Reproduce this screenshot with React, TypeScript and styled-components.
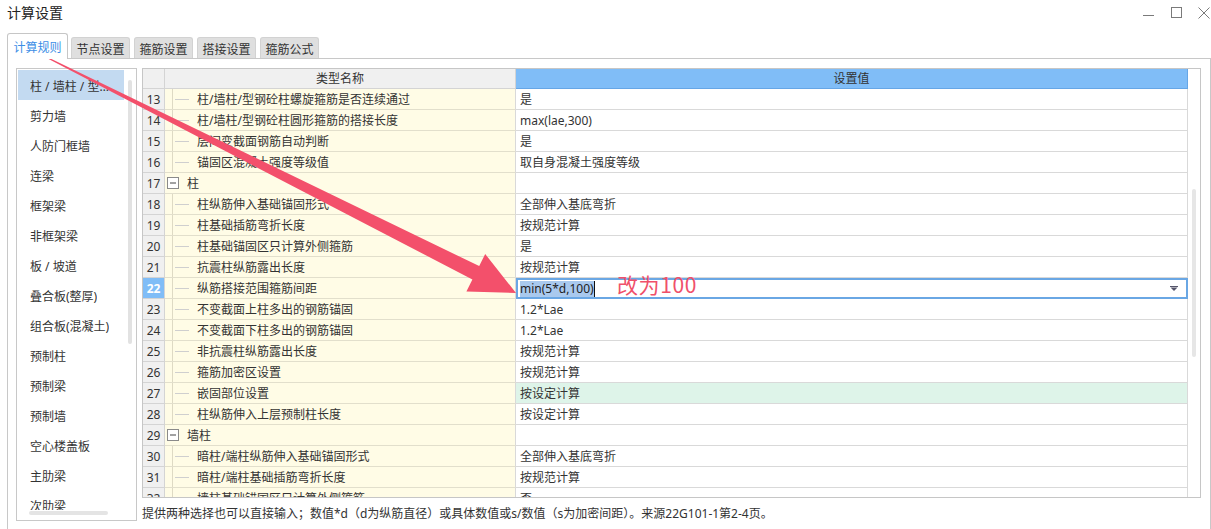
import React from "react";
import styled, { createGlobalStyle } from "styled-components";

type Row = {
  n: number;
  name: string;
  value?: string;
  group?: boolean;
  tone?: "edit" | "green";
};

const GlobalStyle = createGlobalStyle`
  html, body {
    margin: 0;
    padding: 0;
    background: #ffffff;
    overflow: hidden;
  }
  body {
    font-family: "Noto Sans", "Noto Sans CJK SC", sans-serif;
    font-size: 12px;
    color: #333333;
  }
`;

const Window = styled.div`
  position: relative;
  width: 1211px;
  height: 545px;
  display: flex;
  flex-direction: column;
  background: #ffffff;
`;

const TitleBar = styled.div`
  height: 26px;
  display: flex;
  align-items: center;
  justify-content: space-between;
  padding-left: 7px;
`;

const Title = styled.div`
  font-size: 14px;
  color: #222222;
  line-height: 18px;
`;

const Controls = styled.div`
  display: flex;
  gap: 16px;
  padding-right: 1px;
`;

const TabStrip = styled.div`
  margin-top: 7px;
  height: 25px;
  display: flex;
  align-items: flex-end;
  padding-left: 7px;
  gap: 3px;
`;

const Tab = styled.div<{ $active?: boolean }>`
  position: relative;
  z-index: 1;
  box-sizing: border-box;
  width: ${(p) => (p.$active ? 61 : 59)}px;
  height: ${(p) => (p.$active ? 26 : 21)}px;
  margin-bottom: ${(p) => (p.$active ? -1 : 0)}px;
  margin-right: ${(p) => (p.$active ? 0 : 1)}px;
  display: flex;
  align-items: center;
  justify-content: center;
  border: 1px solid ${(p) => (p.$active ? "#c6c6c6" : "#d2d2d2")};
  border-bottom: none;
  border-radius: 3px 3px 0 0;
  background: ${(p) => (p.$active ? "#ffffff" : "#dfdfdf")};
  color: ${(p) => (p.$active ? "#3d8ee6" : "#333333")};
  font-size: 12px;
  padding-top: ${(p) => (p.$active ? 0 : 1)}px;
`;

const Panel = styled.div`
  flex: 1;
  margin-left: 7px;
  border: 1px solid #c8c8c8;
  display: flex;
  align-items: flex-start;
  gap: 5px;
  padding: 9px 9px 0 8px;
`;

const ListBox = styled.div`
  box-sizing: border-box;
  width: 121px;
  height: 453px;
  border: 1px solid #c8c8c8;
  display: flex;
  flex-direction: column;
  overflow: hidden;
`;

const ListMain = styled.div`
  flex: 1;
  display: flex;
  overflow: hidden;
`;

const ListItems = styled.div`
  width: 107px;
  padding: 1px 0 0 1px;
  box-sizing: border-box;
  display: flex;
  flex-direction: column;
`;

const ListItem = styled.div<{ $selected?: boolean }>`
  flex: 0 0 30px;
  box-sizing: border-box;
  padding: 1px 10px 0 12px;
  display: flex;
  align-items: center;
  background: ${(p) => (p.$selected ? "#c3daf1" : "transparent")};
  color: #333333;
  white-space: nowrap;
  overflow: hidden;
  span {
    overflow: hidden;
    text-overflow: ellipsis;
  }
`;

const VScroll = styled.div<{ $top: number; $height: number }>`
  width: 12px;
  &::after {
    content: "";
    display: block;
    width: 4px;
    margin-left: 4px;
    margin-top: ${(p) => p.$top}px;
    height: ${(p) => p.$height}px;
    border-radius: 2px;
    background: #e2e2e2;
  }
`;

const HScroll = styled.div`
  height: 10px;
  flex: 0 0 10px;
  &::after {
    content: "";
    display: block;
    width: 79px;
    height: 4px;
    margin: 1px 0 0 12px;
    border-radius: 2px;
    background: #e4e4e4;
  }
`;

const RightCol = styled.div`
  width: 1059px;
  display: flex;
  flex-direction: column;
`;

const Table = styled.div`
  box-sizing: border-box;
  height: 430px;
  border: 1px solid #c6c6c6;
  display: flex;
  overflow: hidden;
`;

const Grid = styled.div`
  width: 1045px;
  display: grid;
  grid-template-columns: 22px 351px 672px;
  grid-template-rows: 20px;
  grid-auto-rows: 21px;
  align-content: start;
  overflow: hidden;
`;

const Cell = styled.div`
  box-sizing: border-box;
  border-right: 1px solid #d9d9d9;
  border-bottom: 1px solid #d9d9d9;
  display: flex;
  align-items: center;
  white-space: nowrap;
  overflow: hidden;
  line-height: 16px;
  padding-top: 1px;
`;

const HeadCell = styled(Cell)<{ $blue?: boolean }>`
  justify-content: center;
  background: ${(p) => (p.$blue ? "#80bdf7" : "#f0f0f0")};
  border-color: ${(p) => (p.$blue ? "#66a6e6" : "#d4d4d4")};
  color: #333333;
`;

const NumCell = styled(Cell)<{ $active?: boolean }>`
  justify-content: center;
  background: ${(p) => (p.$active ? "#80bdf7" : "#f0f0f0")};
  border-color: #d4d4d4;
  color: ${(p) => (p.$active ? "#ffffff" : "#333333")};
  font-weight: ${(p) => (p.$active ? 700 : 400)};
`;

const NameCell = styled(Cell)`
  background: #fffce6;
  border-bottom-color: #e2dfcc;
  padding-top: 0;
  svg {
    flex: 0 0 auto;
  }
`;

const ValueCell = styled(Cell)<{ $tone?: "edit" | "green" }>`
  padding-left: 4px;
  background: ${(p) => (p.$tone === "green" ? "#def4e9" : "#ffffff")};
  ${(p) =>
    p.$tone === "edit"
      ? `border: none; box-shadow: inset 0 0 0 2px #6aa7e4; justify-content: space-between; padding-right: 10px;`
      : ""}
`;

const TreeText = styled.span`
  margin-left: 1px;
  padding-top: 1px;
`;

const Selected = styled.span`
  background: #a9c9ee;
  color: #222222;
  border-right: 1px solid #111111;
`;

const TableScroll = styled.div`
  width: 12px;
  &::after {
    content: "";
    display: block;
    width: 4px;
    height: 168px;
    margin: 120px 0 0 4px;
    border-radius: 2px;
    background: #e6e6e6;
  }
`;

const Status = styled.div`
  margin-top: 7px;
  line-height: 17px;
  color: #333333;
  white-space: nowrap;
`;

const Overlay = styled.svg`
  position: absolute;
  left: 0;
  top: 0;
  pointer-events: none;
`;

const Note = styled.div`
  position: absolute;
  left: 617px;
  top: 270px;
  font-family: "Noto Sans CJK SC", "Noto Sans", sans-serif;
  font-size: 21px;
  letter-spacing: 0.6px;
  line-height: 28px;
  color: #f0506a;
`;

const listItems = [
  "柱 / 墙柱 / 型钢混凝土柱",
  "剪力墙",
  "人防门框墙",
  "连梁",
  "框架梁",
  "非框架梁",
  "板 / 坡道",
  "叠合板(整厚)",
  "组合板(混凝土)",
  "预制柱",
  "预制梁",
  "预制墙",
  "空心楼盖板",
  "主肋梁",
  "次肋梁",
];

const rows: Row[] = [
  { n: 13, name: "柱/墙柱/型钢砼柱螺旋箍筋是否连续通过", value: "是" },
  { n: 14, name: "柱/墙柱/型钢砼柱圆形箍筋的搭接长度", value: "max(lae,300)" },
  { n: 15, name: "层间变截面钢筋自动判断", value: "是" },
  { n: 16, name: "锚固区混凝土强度等级值", value: "取自身混凝土强度等级" },
  { n: 17, name: "柱", group: true },
  { n: 18, name: "柱纵筋伸入基础锚固形式", value: "全部伸入基底弯折" },
  { n: 19, name: "柱基础插筋弯折长度", value: "按规范计算" },
  { n: 20, name: "柱基础锚固区只计算外侧箍筋", value: "是" },
  { n: 21, name: "抗震柱纵筋露出长度", value: "按规范计算" },
  { n: 22, name: "纵筋搭接范围箍筋间距", value: "min(5*d,100)", tone: "edit" },
  { n: 23, name: "不变截面上柱多出的钢筋锚固", value: "1.2*Lae" },
  { n: 24, name: "不变截面下柱多出的钢筋锚固", value: "1.2*Lae" },
  { n: 25, name: "非抗震柱纵筋露出长度", value: "按规范计算" },
  { n: 26, name: "箍筋加密区设置", value: "按规范计算" },
  { n: 27, name: "嵌固部位设置", value: "按设定计算", tone: "green" },
  { n: 28, name: "柱纵筋伸入上层预制柱长度", value: "按设定计算" },
  { n: 29, name: "墙柱", group: true },
  { n: 30, name: "暗柱/端柱纵筋伸入基础锚固形式", value: "全部伸入基底弯折" },
  { n: 31, name: "暗柱/端柱基础插筋弯折长度", value: "按规范计算" },
  { n: 32, name: "墙柱基础锚固区只计算外侧箍筋", value: "否" },
];

const TreeGuide: React.FC<{ group?: boolean }> = ({ group }) =>
  group ? (
    <svg width="21" height="20" viewBox="0 0 21 20">
      <rect x="2.5" y="4.5" width="11" height="11" fill="#ffffff" stroke="#8a8a8a" />
      <line x1="5" y1="10" x2="11" y2="10" stroke="#444444" />
    </svg>
  ) : (
    <svg width="31" height="20" viewBox="0 0 31 20">
      <line x1="7.5" y1="0" x2="7.5" y2="20" stroke="#dedac4" />
      <line x1="10" y1="10.5" x2="24" y2="10.5" stroke="#cfcfcf" />
    </svg>
  );

const DropIcon = () => (
  <svg width="8" height="6" viewBox="0 0 8 6">
    <rect x="0" y="0" width="8" height="1" fill="#55556a" />
    <path d="M0.5 1.5 L7.5 1.5 L4 5 Z" fill="#55556a" />
  </svg>
);

const arrowPoints = () => {
  const s = { x: 46, y: 57 };
  const t = { x: 516, y: 293 };
  const dx = t.x - s.x;
  const dy = t.y - s.y;
  const len = Math.hypot(dx, dy);
  const ux = dx / len;
  const uy = dy / len;
  const nx = -uy;
  const ny = ux;
  const headLen = 45;
  const headHalf = 21;
  const bx = t.x - ux * headLen;
  const by = t.y - uy * headLen;
  const w0 = 0.7;
  const w1 = 7.5;
  const pts = [
    [s.x + nx * w0, s.y + ny * w0],
    [bx + nx * w1, by + ny * w1],
    [bx + nx * headHalf, by + ny * headHalf],
    [t.x, t.y],
    [bx - nx * headHalf, by - ny * headHalf],
    [bx - nx * w1, by - ny * w1],
    [s.x - nx * w0, s.y - ny * w0],
  ];
  return pts.map((p) => `${p[0].toFixed(1)},${p[1].toFixed(1)}`).join(" ");
};

const App: React.FC = () => (
  <Window>
    <GlobalStyle />
    <TitleBar>
      <Title>计算设置</Title>
      <Controls>
        <svg width="12" height="12" viewBox="0 0 12 12">
          <line x1="1" y1="8.5" x2="12" y2="8.5" stroke="#7a7a7a" />
        </svg>
        <svg width="12" height="12" viewBox="0 0 12 12">
          <rect x="1.5" y="0.5" width="10" height="10" fill="none" stroke="#7a7a7a" />
        </svg>
        <svg width="12" height="12" viewBox="0 0 12 12">
          <path d="M0.5 0.5 L11.5 11.5 M11.5 0.5 L0.5 11.5" stroke="#7a7a7a" />
        </svg>
      </Controls>
    </TitleBar>

    <TabStrip>
      <Tab $active>计算规则</Tab>
      <Tab>节点设置</Tab>
      <Tab>箍筋设置</Tab>
      <Tab>搭接设置</Tab>
      <Tab>箍筋公式</Tab>
    </TabStrip>

    <Panel>
      <ListBox>
        <ListMain>
          <ListItems>
            {listItems.map((item, i) => (
              <ListItem key={item} $selected={i === 0}>
                <span>{item}</span>
              </ListItem>
            ))}
          </ListItems>
          <VScroll $top={11} $height={264} />
        </ListMain>
        <HScroll />
      </ListBox>

      <RightCol>
        <Table>
          <Grid>
            <HeadCell />
            <HeadCell>类型名称</HeadCell>
            <HeadCell $blue>设置值</HeadCell>
            {rows.map((r) => (
              <React.Fragment key={r.n}>
                <NumCell $active={r.tone === "edit"}>{r.n}</NumCell>
                <NameCell>
                  <TreeGuide group={r.group} />
                  <TreeText>{r.name}</TreeText>
                </NameCell>
                <ValueCell $tone={r.tone}>
                  {r.tone === "edit" ? (
                    <>
                      <Selected>{r.value}</Selected>
                      <DropIcon />
                    </>
                  ) : (
                    r.value
                  )}
                </ValueCell>
              </React.Fragment>
            ))}
          </Grid>
          <TableScroll />
        </Table>
        <Status>
          提供两种选择也可以直接输入；数值*d（d为纵筋直径）或具体数值或s/数值（s为加密间距）。来源22G101-1第2-4页。
        </Status>
      </RightCol>
    </Panel>

    <Overlay width="1211" height="529" viewBox="0 0 1211 529">
      <polygon points={arrowPoints()} fill="#f3506b" />
    </Overlay>
    <Note>改为100</Note>
  </Window>
);

export default App;
